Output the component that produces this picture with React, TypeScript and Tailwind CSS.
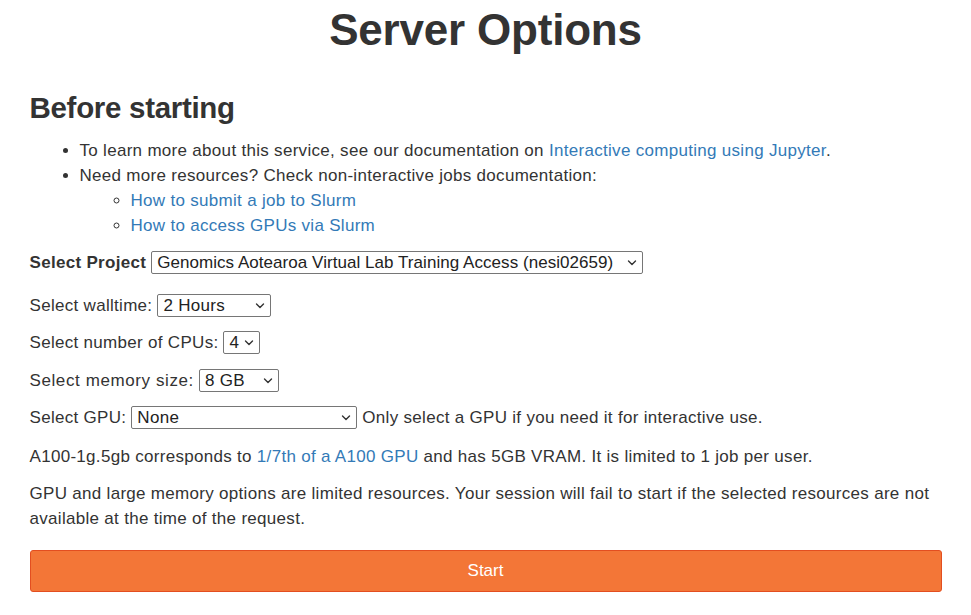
import type { ReactNode } from "react";

function Chevron() {
  return (
    <svg className="h-[8px] w-[10px] shrink-0" viewBox="0 0 10 8" fill="none">
      <polyline points="1.5,2 5,5.5 8.5,2" stroke="#333" strokeWidth="1.4" strokeLinecap="round" strokeLinejoin="round" />
    </svg>
  );
}

function FakeSelect({ value, width }: { value: string; width: string }) {
  return (
    <span
      className={`inline-flex h-[23px] items-center justify-between gap-[4px] rounded-[2px] border border-[#767676] bg-white pl-[5px] pr-[5px] text-[#222] ${width}`}
    >
      <span className="whitespace-nowrap">{value}</span>
      <Chevron />
    </span>
  );
}

function Row({ children, className = "" }: { children: ReactNode; className?: string }) {
  return <div className={`flex h-[25px] items-center gap-[5px] ${className}`}>{children}</div>;
}

function Link({ children }: { children: ReactNode }) {
  return (
    <a className="text-[#337ab7] no-underline" href="#">
      {children}
    </a>
  );
}

export default function App() {
  return (
    <div
      className="min-h-[615px] bg-white text-[#333]"
      style={{ fontFamily: '"Liberation Sans", Arial, Helvetica, sans-serif' }}
    >
      <div className="mx-auto w-[912px] pt-[6px]">
        <h1 className="text-center text-[44px] font-bold leading-[48px] tracking-[-0.2px]">Server Options</h1>
        <h2 className="mt-[37px] text-[29.5px] font-bold leading-[33px] tracking-[-0.3px]">Before starting</h2>

        <ul className="mt-[14px] list-disc pl-[50px] text-[17px] leading-[25px] tracking-[0.3px]">
          <li>
            To learn more about this service, see our documentation on{" "}
            <Link>Interactive computing using Jupyter</Link>.
          </li>
          <li>
            Need more resources? Check non-interactive jobs documentation:
            <ul className="list-[circle] pl-[51px]">
              <li>
                <Link>How to submit a job to Slurm</Link>
              </li>
              <li>
                <Link>How to access GPUs via Slurm</Link>
              </li>
            </ul>
          </li>
        </ul>

        <div className="mt-[12px] text-[17px] leading-[25px] tracking-[0.3px]">
          <Row className="mb-[18px]">
            <span className="font-bold">Select Project</span>
            <span className="tracking-[0.05px]">
              <FakeSelect value="Genomics Aotearoa Virtual Lab Training Access (nesi02659)" width="w-[492px]" />
            </span>
          </Row>
          <Row className="mb-[12px]">
            <span>Select walltime:</span>
            <FakeSelect value="2 Hours" width="w-[114px]" />
          </Row>
          <Row className="mb-[13px]">
            <span>Select number of CPUs:</span>
            <FakeSelect value="4" width="w-[37px]" />
          </Row>
          <Row className="mb-[12px]">
            <span className="tracking-[0.6px]">Select memory size:</span>
            <FakeSelect value="8 GB" width="w-[80px]" />
          </Row>
          <Row>
            <span>Select GPU:</span>
            <FakeSelect value="None" width="w-[226px]" />
            <span>Only select a GPU if you need it for interactive use.</span>
          </Row>

          <p className="mt-[14px]">
            A100-1g.5gb corresponds to <Link>1/7th of a A100 GPU</Link> and has 5GB VRAM. It is limited to 1 job per
            user.
          </p>
          <p className="mt-[12px]">
            GPU and large memory options are limited resources. Your session will fail to start if the selected
            resources are not available at the time of the request.
          </p>
        </div>

        <button
          className="mt-[19px] h-[42px] w-full rounded-[3px] border border-[#e34e20] bg-[#f37637] text-[17px] text-white"
          type="button"
        >
          Start
        </button>
      </div>
    </div>
  );
}
